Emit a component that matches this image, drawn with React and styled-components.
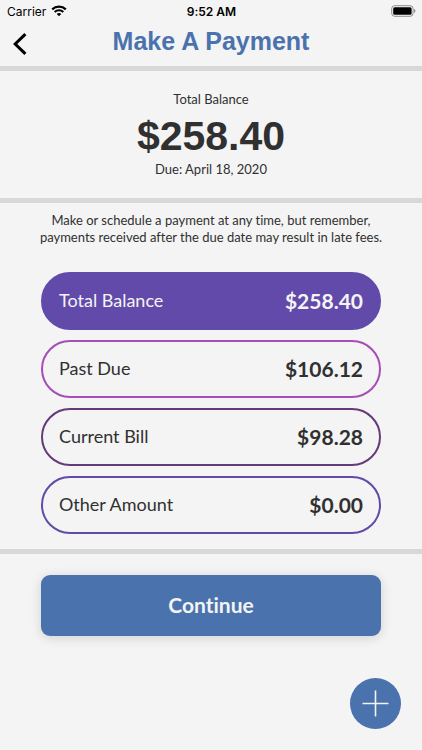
import React, { useState } from "react";
import styled, { createGlobalStyle } from "styled-components";

const GlobalStyle = createGlobalStyle`
  * {
    box-sizing: border-box;
  }

  body {
    margin: 0;
    background: #f4f4f4;
    color: #303030;
    font-family: Lato, "Open Sans", sans-serif;
    font-variant-ligatures: none;
  }

  h1, p {
    margin: 0;
  }

  button {
    font-family: inherit;
    font-variant-ligatures: none;
    cursor: pointer;
  }
`;

const Screen = styled.div`
  display: flex;
  flex-direction: column;
  min-height: 100vh;
`;

const StatusBar = styled.div`
  display: grid;
  grid-template-columns: 1fr auto 1fr;
  align-items: center;
  height: 22px;
  padding: 0 6px 0 7px;
  color: #000;
  font-family: Inter, sans-serif;
  font-size: 12px;
`;

const Carrier = styled.span`
  display: flex;
  align-items: center;
  gap: 5px;
`;

const Time = styled.span`
  font-weight: 600;
`;

const Battery = styled.svg`
  justify-self: end;
`;

const Header = styled.header`
  display: grid;
  grid-template-columns: 40px 1fr 40px;
  align-items: center;
  height: 44px;
`;

const BackButton = styled.button`
  display: flex;
  align-items: center;
  justify-content: center;
  height: 40px;
  padding: 0;
  border: none;
  background: none;
  color: #000;
`;

const Title = styled.h1`
  height: 44px;
  color: #4a72ad;
  font-family: "Liberation Sans", Arial, sans-serif;
  font-size: 25px;
  font-weight: bold;
  line-height: 38px;
  text-align: center;
`;

const Divider = styled.div`
  height: 5px;
  background: #d8d8d8;
`;

const Summary = styled.section`
  padding: 19px 20px 20px;
  text-align: center;
`;

const SummaryText = styled.p`
  font-size: 13px;
  line-height: 18px;
`;

const Balance = styled.p`
  padding-top: 4px;
  font-family: "Liberation Sans", Arial, sans-serif;
  font-size: 41px;
  font-weight: bold;
  line-height: 48px;
`;

const Note = styled.p`
  padding: 9px 38px 26px;
  font-size: 13px;
  line-height: 17px;
  text-align: center;
`;

const Options = styled.div`
  display: flex;
  flex-direction: column;
  gap: 10px;
  padding: 0 41px 15px;
`;

const Option = styled.label`
  display: flex;
  align-items: center;
  justify-content: space-between;
  height: 58px;
  padding: 0 16px 2px;
  border: 2px solid ${({ $color }) => $color};
  border-radius: 29px;
  background: ${({ $active, $color }) => ($active ? $color : "transparent")};
  color: ${({ $active }) => ($active ? "#f4f4f4" : "#303030")};
  cursor: pointer;
`;

const Radio = styled.input`
  appearance: none;
  width: 0;
  height: 0;
  margin: 0;
`;

const OptionName = styled.span`
  flex-grow: 1;
  font-size: 18px;
`;

const Amount = styled.span`
  font-size: 21px;
  font-weight: bold;
`;

const Actions = styled.div`
  padding: 21px 41px;
`;

const ContinueButton = styled.button`
  width: 100%;
  height: 61px;
  padding: 0 0 2px;
  border: none;
  border-radius: 9px;
  background: #4a72ad;
  box-shadow: 0 2px 12px rgba(0, 0, 0, 0.14);
  color: #f4f4f4;
  font-size: 21px;
  font-weight: bold;
`;

const AddButton = styled.button`
  display: flex;
  align-items: center;
  justify-content: center;
  align-self: flex-end;
  width: 51px;
  height: 51px;
  margin: auto 21px 21px 0;
  padding: 0;
  border: none;
  border-radius: 50%;
  background: #4a72ad;
  color: #f4f4f4;
`;

const options = [
  { id: "total", name: "Total Balance", amount: "$258.40", color: "#624aaa" },
  { id: "past", name: "Past Due", amount: "$106.12", color: "#a64db8" },
  { id: "current", name: "Current Bill", amount: "$98.28", color: "#653a78" },
  { id: "other", name: "Other Amount", amount: "$0.00", color: "#624aaa" },
];

const App = () => {
  const [selected, setSelected] = useState("total");

  return (
    <Screen>
      <GlobalStyle />
      <StatusBar>
        <Carrier>
          Carrier
          <svg width="16" height="12" viewBox="0 0 16 12" fill="none">
            <path d="M1.2 4.4a9.8 9.8 0 0 1 13.6 0" stroke="#000" strokeWidth="2.3" />
            <path d="M3.7 7a6.2 6.2 0 0 1 8.6 0" stroke="#000" strokeWidth="2.1" />
            <path d="M8 11.3 5.7 9a3.3 3.3 0 0 1 4.6 0z" fill="#000" />
          </svg>
        </Carrier>
        <Time>9:52 AM</Time>
        <Battery width="25" height="12" viewBox="0 0 25 12">
          <rect x="0.7" y="0.7" width="21.4" height="10.6" rx="3" fill="none" stroke="#8c8c8c" />
          <rect x="2.2" y="2.2" width="18.4" height="7.6" rx="1.5" fill="#000" />
          <path d="M23.2 4.1c1.6.6 1.6 3.2 0 3.8z" fill="#777" />
        </Battery>
      </StatusBar>
      <Header>
        <BackButton aria-label="Back">
          <svg width="14" height="22" viewBox="0 0 14 22" fill="none">
            <path d="M12.4 1.2 2.2 11l10.2 9.8" stroke="#000" strokeWidth="3" />
          </svg>
        </BackButton>
        <Title>Make A Payment</Title>
      </Header>
      <Divider />
      <Summary>
        <SummaryText>Total Balance</SummaryText>
        <Balance>$258.40</Balance>
        <SummaryText>Due: April 18, 2020</SummaryText>
      </Summary>
      <Divider />
      <Note>
        Make or schedule a payment at any time, but remember, payments received
        after the due date may result in late fees.
      </Note>
      <Options role="radiogroup" aria-label="Payment amount">
        {options.map(({ id, name, amount, color }) => (
          <Option key={id} $color={color} $active={selected === id}>
            <Radio
              type="radio"
              name="amount"
              value={id}
              checked={selected === id}
              onChange={() => setSelected(id)}
            />
            <OptionName>{name}</OptionName>
            <Amount>{amount}</Amount>
          </Option>
        ))}
      </Options>
      <Divider />
      <Actions>
        <ContinueButton>Continue</ContinueButton>
      </Actions>
      <AddButton aria-label="Add">
        <svg width="27" height="27" viewBox="0 0 27 27" stroke="currentColor" strokeWidth="1.6">
          <path d="M13.5 0.5v26M0.5 13.5h26" />
        </svg>
      </AddButton>
    </Screen>
  );
};

export default App;
